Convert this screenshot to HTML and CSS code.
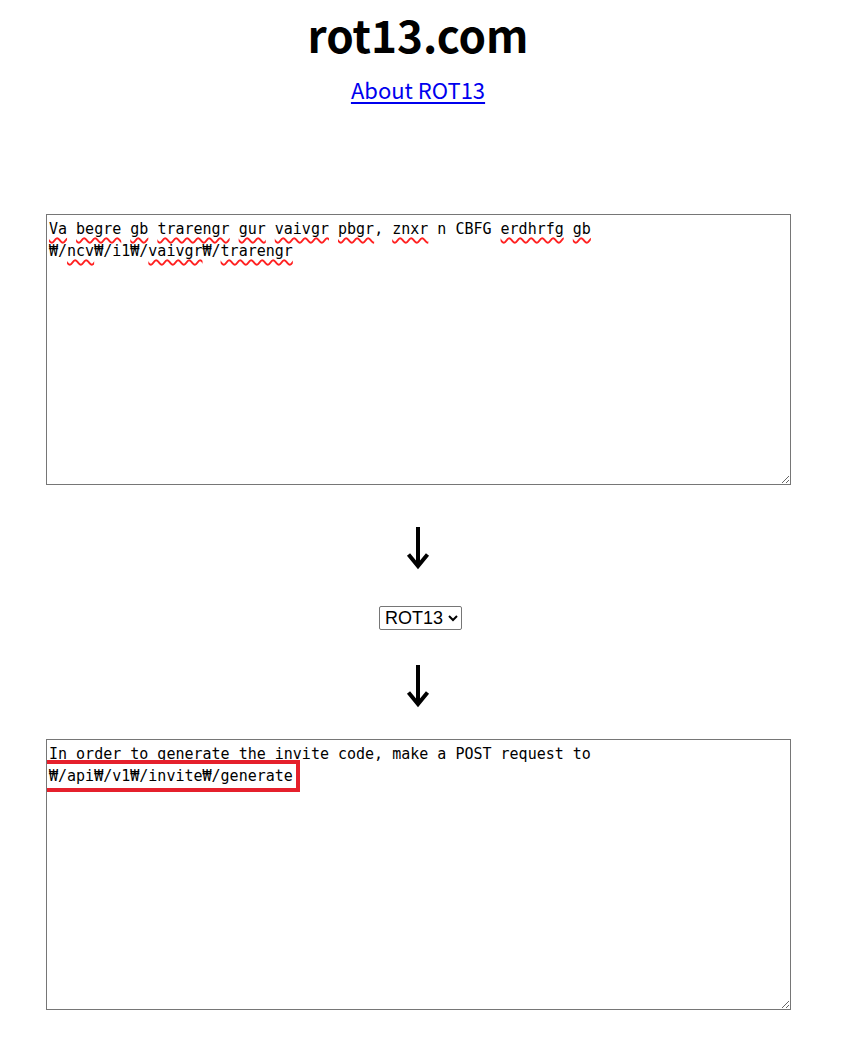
FILE: index.html
```html
<!DOCTYPE html>
<html lang="en">
<head>
<meta charset="utf-8">
<title>rot13.com</title>
<link rel="stylesheet" href="styles.css">
</head>
<body>
<main class="page">
  <h1 class="title">rot13.com</h1>
  <a class="about" href="#about">About ROT13</a>

  <div class="box box-top" role="textbox" aria-multiline="true" contenteditable="true" spellcheck="false"><span class="sp">Va</span> <span class="sp">begre</span> <span class="sp">gb</span> <span class="sp">trarengr</span> <span class="sp">gur</span> <span class="sp">vaivgr</span> <span class="sp">pbgr</span>, <span class="sp">znxr</span> n CBFG <span class="sp">erdhrfg</span> <span class="sp">gb</span> ₩/<span class="sp">ncv</span>₩/i1₩/<span class="sp">vaivgr</span>₩/<span class="sp">trarengr</span></div>

  <svg class="arrow" width="24" height="44" viewBox="0 0 24 44" aria-hidden="true">
    <line x1="12" y1="0" x2="12" y2="38" stroke="#000" stroke-width="4"/>
    <polyline points="2.5,27.5 12,39 21.5,27.5" fill="none" stroke="#000" stroke-width="4" stroke-linejoin="miter"/>
  </svg>

  <select class="cipher">
    <option>ROT13</option>
    <option>ROT47</option>
  </select>

  <svg class="arrow arrow-2" width="24" height="44" viewBox="0 0 24 44" aria-hidden="true">
    <line x1="12" y1="0" x2="12" y2="38" stroke="#000" stroke-width="4"/>
    <polyline points="2.5,27.5 12,39 21.5,27.5" fill="none" stroke="#000" stroke-width="4" stroke-linejoin="miter"/>
  </svg>

  <div class="box box-bottom" role="textbox" aria-multiline="true" contenteditable="true" spellcheck="false">In order to generate the invite code, make a POST request to <span class="mark">₩/api₩/v1₩/invite₩/generate</span></div>
</main>
</body>
</html>
```

FILE: styles.css
```css
html, body {
  margin: 0;
  padding: 0;
  background: #ffffff;
}

.page {
  width: 836px;
  display: flex;
  flex-direction: column;
  align-items: center;
  padding-top: 6px;
  font-family: "Noto Sans CJK KR", "Noto Sans", sans-serif;
  color: #000;
}

.title {
  margin: 0;
  font-size: 44px;
  line-height: 56px;
  font-weight: 700;
}

.about {
  margin-top: 12px;
  font-size: 22px;
  line-height: 30px;
  color: #0000ee;
  text-decoration: underline;
  text-underline-offset: 3px;
}

.box {
  box-sizing: border-box;
  width: 745px;
  height: 271px;
  margin-left: 1px;
  border: 1px solid #767676;
  padding: 3px 2px 2px;
  font-family: "DejaVu Sans Mono", "Liberation Mono", monospace;
  font-size: 15px;
  line-height: 22px;
  white-space: pre-wrap;
  word-break: normal;
  overflow: auto;
  resize: both;
  outline: none;
  background: #fff;
  text-align: left;
}

.box-top {
  margin-top: 110px;
}

.sp {
  text-decoration: underline wavy #ff2020;
  text-decoration-thickness: 1.5px;
  text-decoration-skip-ink: none;
  text-underline-offset: 3px;
}

.arrow {
  display: block;
  margin-top: 42px;
}

.arrow-2 {
  margin-top: 35px;
}

.cipher {
  margin-top: 35px;
  margin-left: 5px;
  height: 24px;
  font-family: "Liberation Sans", Arial, sans-serif;
  font-size: 18px;
  color: #000;
  background: #fff;
  border: 1px solid #767676;
  border-radius: 2px;
  padding: 0 1px;
}

.box-bottom {
  margin-top: 30px;
}

.mark {
  outline: 4px solid #e5202c;
  outline-offset: 3px;
}
```
